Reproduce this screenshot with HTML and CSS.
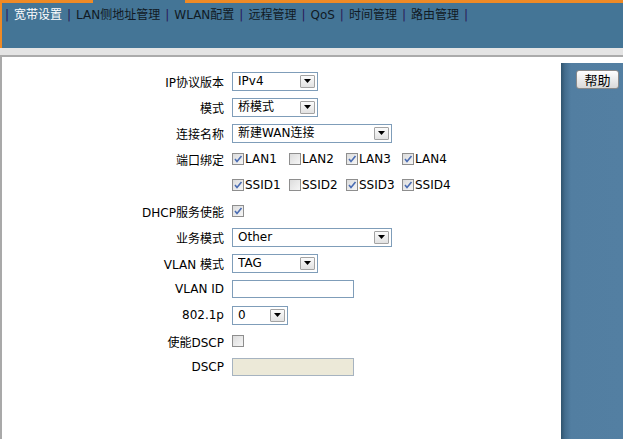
FILE: index.html
```html
<!DOCTYPE html>
<html lang="zh-CN">
<head>
<meta charset="utf-8">
<title>宽带设置</title>
<link rel="stylesheet" href="styles.css">
</head>
<body>
<header class="topbar">
  <div class="accent"><span class="acc-a"></span><span class="acc-b"></span><span class="acc-c"></span></div>
  <nav class="nav">
    <span class="bar first">|</span><a class="tab active">宽带设置</a><span class="bar">|</span><a class="tab">LAN侧地址管理</a><span class="bar">|</span><a class="tab">WLAN配置</a><span class="bar">|</span><a class="tab">远程管理</a><span class="bar">|</span><a class="tab">QoS</a><span class="bar">|</span><a class="tab">时间管理</a><span class="bar">|</span><a class="tab">路由管理</a><span class="bar">|</span>
  </nav>
</header>
<div class="sep"></div>
<div class="main">
  <form class="form">
    <label class="lbl">IP协议版本</label>
    <div class="ctl"><div class="sel w86"><select><option>IPv4</option></select><span class="btn"><svg width="7" height="4" viewBox="0 0 7 4"><path d="M0 0h7L3.5 4z" fill="#000"/></svg></span></div></div>

    <label class="lbl">模式</label>
    <div class="ctl"><div class="sel w86"><select><option>桥模式</option></select><span class="btn"><svg width="7" height="4" viewBox="0 0 7 4"><path d="M0 0h7L3.5 4z" fill="#000"/></svg></span></div></div>

    <label class="lbl">连接名称</label>
    <div class="ctl"><div class="sel w160"><select><option>新建WAN连接</option></select><span class="btn"><svg width="7" height="4" viewBox="0 0 7 4"><path d="M0 0h7L3.5 4z" fill="#000"/></svg></span></div></div>

    <label class="lbl">端口绑定</label>
    <div class="ctl checks">
      <span class="chk"><span class="box"><svg width="10" height="10" viewBox="0 0 10 10"><path d="M2 5l2 2.5L8.5 2" stroke="#4a6cb2" stroke-width="1.6" fill="none"/></svg></span>LAN1</span>
      <span class="chk"><span class="box"></span>LAN2</span>
      <span class="chk"><span class="box"><svg width="10" height="10" viewBox="0 0 10 10"><path d="M2 5l2 2.5L8.5 2" stroke="#4a6cb2" stroke-width="1.6" fill="none"/></svg></span>LAN3</span>
      <span class="chk"><span class="box"><svg width="10" height="10" viewBox="0 0 10 10"><path d="M2 5l2 2.5L8.5 2" stroke="#4a6cb2" stroke-width="1.6" fill="none"/></svg></span>LAN4</span>
    </div>

    <label class="lbl"></label>
    <div class="ctl checks">
      <span class="chk"><span class="box"><svg width="10" height="10" viewBox="0 0 10 10"><path d="M2 5l2 2.5L8.5 2" stroke="#4a6cb2" stroke-width="1.6" fill="none"/></svg></span>SSID1</span>
      <span class="chk"><span class="box"></span>SSID2</span>
      <span class="chk"><span class="box"><svg width="10" height="10" viewBox="0 0 10 10"><path d="M2 5l2 2.5L8.5 2" stroke="#4a6cb2" stroke-width="1.6" fill="none"/></svg></span>SSID3</span>
      <span class="chk"><span class="box"><svg width="10" height="10" viewBox="0 0 10 10"><path d="M2 5l2 2.5L8.5 2" stroke="#4a6cb2" stroke-width="1.6" fill="none"/></svg></span>SSID4</span>
    </div>

    <label class="lbl">DHCP服务使能</label>
    <div class="ctl"><span class="chk"><span class="box"><svg width="10" height="10" viewBox="0 0 10 10"><path d="M2 5l2 2.5L8.5 2" stroke="#4a6cb2" stroke-width="1.6" fill="none"/></svg></span></span></div>

    <label class="lbl">业务模式</label>
    <div class="ctl"><div class="sel w160"><select><option>Other</option></select><span class="btn"><svg width="7" height="4" viewBox="0 0 7 4"><path d="M0 0h7L3.5 4z" fill="#000"/></svg></span></div></div>

    <label class="lbl">VLAN 模式</label>
    <div class="ctl"><div class="sel w86"><select><option>TAG</option></select><span class="btn"><svg width="7" height="4" viewBox="0 0 7 4"><path d="M0 0h7L3.5 4z" fill="#000"/></svg></span></div></div>

    <label class="lbl">VLAN ID</label>
    <div class="ctl"><input class="txt" type="text"></div>

    <label class="lbl">802.1p</label>
    <div class="ctl"><div class="sel w56"><select><option>0</option></select><span class="btn"><svg width="7" height="4" viewBox="0 0 7 4"><path d="M0 0h7L3.5 4z" fill="#000"/></svg></span></div></div>

    <label class="lbl">使能DSCP</label>
    <div class="ctl"><span class="chk"><span class="box"></span></span></div>

    <label class="lbl">DSCP</label>
    <div class="ctl"><input class="txt disabled" type="text" disabled></div>
  </form>
  <aside class="side">
    <button class="help" type="button">帮助</button>
  </aside>
</div>
</body>
</html>
```
FILE: styles.css
```css
* { box-sizing: border-box; }
html, body { margin: 0; padding: 0; }
body {
  width: 623px;
  height: 439px;
  overflow: hidden;
  background: #fff;
  font-family: "DejaVu Sans", "Noto Sans CJK SC", sans-serif;
  font-size: 12px;
  color: #000;
}

.topbar {
  height: 48px;
  border-left: 2px solid #ef8a25;
  background: #447596;
  display: flex;
  flex-direction: column;
}
.accent { display: flex; height: 3px; margin-left: -2px; }
.acc-a { width: 93px; background: #ef8a25; }
.acc-b { width: 92px; background: #447596; }
.acc-c { flex: 1; background: #ef8a25; }

.nav {
  display: flex;
  align-items: center;
  padding: 4px 0 0 3px;
  line-height: 16px;
  white-space: nowrap;
}
.bar { color: #2a1858; padding: 0 5px; }
.bar.first { padding-left: 0; }
.tab { color: #111a24; text-decoration: none; }
.tab.active { color: #fff; }

.sep {
  height: 9px;
  background: #e4e4e4;
  border-bottom: 2px solid #ababab;
}

.main {
  display: flex;
  height: 382px;
  border-left: 2px solid #a9a9a9;
}

.form {
  flex: 1;
  display: grid;
  grid-template-columns: 222px auto;
  grid-auto-rows: 26px;
  column-gap: 8px;
  align-content: start;
  padding-top: 11px;
  margin: 0;
}
.lbl {
  display: flex;
  align-items: center;
  justify-content: flex-end;
  white-space: nowrap;
}
.ctl { display: flex; align-items: center; }

.sel {
  display: flex;
  height: 19px;
  border: 1px solid #7f9db9;
  padding: 1px;
  background: #fff;
}
.w86 { width: 86px; }
.w160 { width: 160px; }
.w56 { width: 56px; }
.sel select {
  appearance: none;
  -webkit-appearance: none;
  flex: 1;
  min-width: 0;
  border: 0;
  outline: 0;
  background: transparent;
  font: inherit;
  color: #000;
  padding: 0 0 0 4px;
  margin: 0;
  height: 15px;
  line-height: 15px;
}
.btn {
  width: 15px;
  height: 13px;
  margin: 1px 1px 0 0;
  border: 1px solid #a3a3a3;
  border-radius: 1px;
  background: linear-gradient(#fbfbfb, #e2e2e2);
  display: flex;
  align-items: center;
  justify-content: center;
}

.checks { display: grid; grid-template-columns: 57px 57px 56px auto; }
.chk { display: inline-flex; align-items: center; gap: 1px; }
.box {
  width: 12px;
  height: 12px;
  border: 1px solid #8e8e8e;
  background: linear-gradient(135deg, #dcdcdc, #f6f6f6);
  display: inline-flex;
  align-items: center;
  justify-content: center;
}

.txt {
  width: 122px;
  height: 18px;
  border: 1px solid #7f9db9;
  background: #fff;
  margin: 0;
  padding: 0 3px;
  font: inherit;
}
.txt.disabled { background: #ece9d8; border-color: #a6b3c0; }

.side {
  width: 62px;
  margin-top: 6px;
  background: linear-gradient(to right, #2f536d 0, #436d8e 4px, #527ea1 10px, #537fa2 100%);
  padding: 7px 0 0 15px;
}
.help {
  width: 43px;
  height: 19px;
  padding: 0;
  border: 1px solid #8a8a8a;
  border-radius: 3px;
  background: linear-gradient(#ffffff, #ececec 50%, #d9d9d9);
  font-family: "Noto Sans CJK SC", sans-serif;
  font-size: 13px;
  line-height: 17px;
  color: #000;
}
```
